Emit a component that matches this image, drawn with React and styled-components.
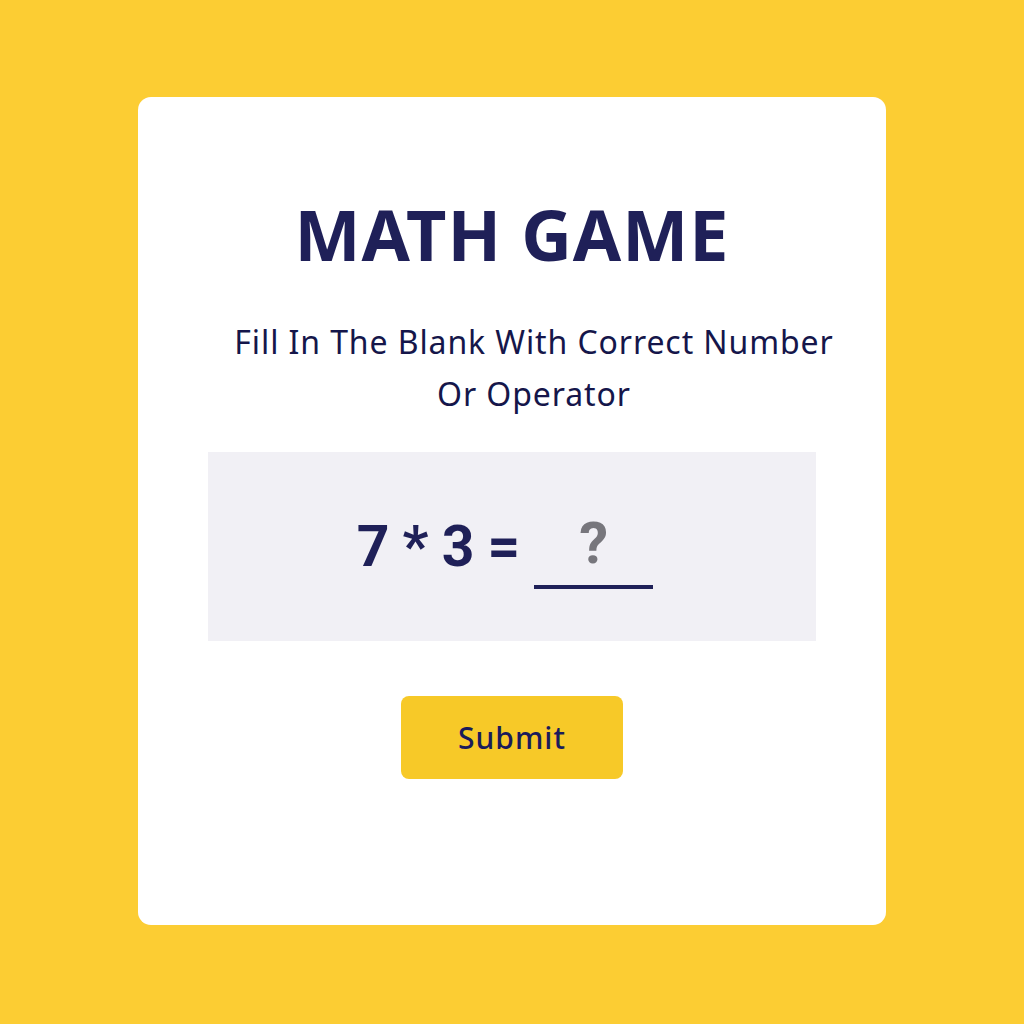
import styled, { createGlobalStyle } from 'styled-components';

const GlobalStyle = createGlobalStyle`
  html, body {
    margin: 0;
    padding: 0;
    background: #fccd33;
  }
  body {
    font-family: "Noto Sans", "Liberation Sans", sans-serif;
  }
`;

const Page = styled.div`
  width: 1024px;
  height: 1024px;
  display: flex;
  justify-content: center;
  padding-top: 97px;
  box-sizing: border-box;
  background: #fccd33;
`;

const Card = styled.div`
  width: 748px;
  height: 828px;
  background: #fff;
  border-radius: 13px;
  display: flex;
  flex-direction: column;
  align-items: center;
  box-sizing: border-box;
  padding-top: 95px;
`;

const Title = styled.h1`
  margin: 0;
  font-family: "Noto Sans", sans-serif;
  font-weight: 700;
  font-size: 70px;
  line-height: 84px;
  color: #1f2058;
  letter-spacing: 1px;
`;

const Subtitle = styled.p`
  margin: 40px 0 0 0;
  padding-left: 44px;
  width: 620px;
  font-family: "Noto Sans", sans-serif;
  font-size: 32px;
  line-height: 52px;
  letter-spacing: 0.9px;
  color: #15164a;
  text-align: center;
`;

const QuestionBox = styled.div`
  margin-top: 32px;
  width: 608px;
  height: 189px;
  background: #f1f0f5;
  display: flex;
  justify-content: center;
  align-items: center;
  padding-right: 14px;
  box-sizing: border-box;
`;

const Expression = styled.span`
  font-family: Roboto, "Liberation Sans", sans-serif;
  font-weight: 700;
  font-size: 57px;
  color: #1f2058;
  letter-spacing: -2px;
  word-spacing: 3px;
`;

const Blank = styled.span`
  margin-left: 16px;
  margin-top: 17px;
  width: 119px;
  height: 64px;
  border-bottom: 4px solid #1f2058;
  display: flex;
  justify-content: center;
  align-items: flex-start;
  font-family: Roboto, "Liberation Sans", sans-serif;
  font-weight: 700;
  font-size: 58px;
  line-height: 44px;
  color: #77767c;
`;

const SubmitButton = styled.button`
  margin-top: 55px;
  width: 222px;
  height: 83px;
  border: none;
  border-radius: 8px;
  background: #f7c928;
  color: #1a1b5a;
  font-family: "Noto Sans", sans-serif;
  font-weight: 500;
  font-size: 30px;
  letter-spacing: 1px;
  cursor: pointer;
`;

export default function App() {
  return (
    <>
      <GlobalStyle />
      <Page>
        <Card>
          <Title>MATH GAME</Title>
          <Subtitle>Fill In The Blank With Correct Number Or Operator</Subtitle>
          <QuestionBox>
            <Expression>7 * 3 =</Expression>
            <Blank>?</Blank>
          </QuestionBox>
          <SubmitButton>Submit</SubmitButton>
        </Card>
      </Page>
    </>
  );
}
